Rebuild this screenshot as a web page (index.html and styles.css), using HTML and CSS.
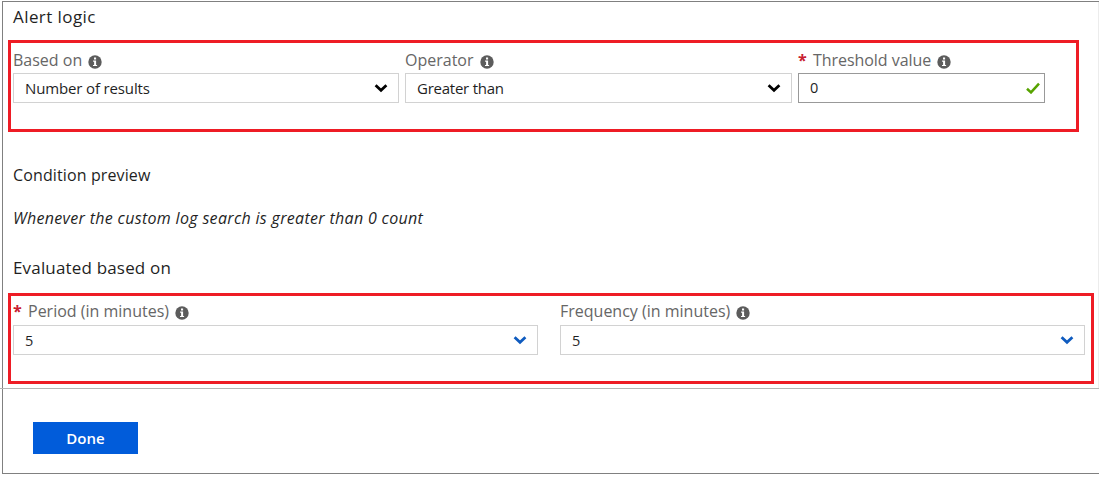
FILE: index.html
```html
<!DOCTYPE html>
<html lang="en">
<head>
<meta charset="utf-8">
<title>Alert logic</title>
<link rel="stylesheet" href="styles.css">
</head>
<body>
<svg width="0" height="0" class="defs">
  <symbol id="info" viewBox="0 0 14 14"><circle cx="7" cy="7" r="6.700" fill="#5c5c5c"/><path d="M6 2.500h2.100v2H6zM5.100 5.600h3v4.300h1v1.200H5V9.900h1.100V6.800h-1z" fill="#fff"/></symbol>
  <symbol id="chev" viewBox="0 0 14 10"><path d="M1.600 2.300 7 7.300 12.400 2.300" fill="none" stroke="currentColor" stroke-width="2.800"/></symbol>
</svg>
<main class="panel">
  <section class="content">
    <h2 class="title"><span class="t-alert">Alert logic</span></h2>
    <div class="marked logic">
      <div class="field based">
        <label class="label"><span>Based on</span><svg class="info"><use href="#info"/></svg></label>
        <div class="select"><span class="t-number">Number of results</span><svg class="chev"><use href="#chev"/></svg></div>
      </div>
      <div class="field operator">
        <label class="label"><span>Operator</span><svg class="info"><use href="#info"/></svg></label>
        <div class="select"><span class="t-greater">Greater than</span><svg class="chev"><use href="#chev"/></svg></div>
      </div>
      <div class="field threshold">
        <label class="label"><b class="req">*</b><span class="t-threshold">Threshold value</span><svg class="info"><use href="#info"/></svg></label>
        <div class="select input"><span class="digit">0</span><svg class="check" viewBox="0 0 14 12"><path d="M1 6.800 5 10.400 13 1.600" fill="none" stroke="#57a300" stroke-width="2.500"/></svg></div>
      </div>
    </div>
    <h3 class="preview-title"><span class="t-condition">Condition preview</span></h3>
    <p class="preview"><span class="t-whenever">Whenever the custom log search is greater than 0 count</span></p>
    <h2 class="evaluated"><span class="t-evaluated">Evaluated based on</span></h2>
    <div class="marked timing">
      <div class="field period">
        <label class="label"><b class="req">*</b><span>Period (in minutes)</span><svg class="info"><use href="#info"/></svg></label>
        <div class="select blue"><span class="digit">5</span><svg class="chev"><use href="#chev"/></svg></div>
      </div>
      <div class="field frequency">
        <label class="label"><span>Frequency (in minutes)</span><svg class="info"><use href="#info"/></svg></label>
        <div class="select blue"><span class="digit">5</span><svg class="chev"><use href="#chev"/></svg></div>
      </div>
    </div>
  </section>
  <footer class="footer"><button class="done">Done</button></footer>
</main>
</body>
</html>
```
FILE: styles.css
```css
* { box-sizing: border-box; }
body { margin: 0; background: #fff; font-family: "Open Sans", "Noto Sans", sans-serif; color: #1f1f1f; overflow: hidden; }
.defs { display: block; position: absolute; }
.panel { margin: 1px 0 0 2px; height: 473px; border: 1px solid #808080; border-right: 0; white-space: nowrap; }
.content { height: 386px; padding-left: 5px; border-right: 1px solid #ececec; }
h2, h3, p { margin: 0; padding-left: 5px; font-weight: 400; }
.title { height: 38px; padding-top: 3px; font-size: 17px; line-height: 24px; }
.t-alert { letter-spacing: 0.42px; }
.t-number { letter-spacing: -0.14px; }
.t-greater { letter-spacing: -0.24px; }
.t-threshold { letter-spacing: -0.05px; }
.t-condition { letter-spacing: 0.12px; }
.t-whenever { letter-spacing: 0.32px; }
.t-evaluated { letter-spacing: 0.17px; }
.marked { display: flex; border: 3px solid #ee1c25; }
.logic { width: 1071px; height: 92px; padding: 7px 0 0 2px; }
.timing { width: 1086px; height: 91px; padding: 5px 0 0 2px; }
.field { flex: none; }
.based { width: 386px; margin-right: 6px; }
.operator { width: 387px; margin-right: 6px; }
.threshold { width: 247px; }
.period { width: 525px; margin-right: 22px; }
.frequency { width: 525px; }
.label { display: flex; height: 23px; line-height: 20px; font-size: 16px; color: #666; }
.timing .label { height: 24px; }
.req { width: 15px; color: #c8202f; font-size: 16px; line-height: 20px; }
.info { width: 14px; height: 14px; margin: 5px 0 0 6px; }
.select { display: flex; align-items: center; justify-content: space-between; height: 30px; padding: 0 10px 0 11px; border: 1px solid #d2d2d2; font-size: 15px; line-height: 28px; }
.digit { font-size: 14.500px; }
.timing .digit { padding-top: 1px; }
.chev { width: 14px; height: 10px; color: #000; }
.blue .chev { color: #0f5bbf; }
.input { padding-right: 4px; border-color: #999; }
.check { width: 14px; height: 12px; }
.preview-title { margin-top: 32px; font-size: 16px; line-height: 22px; }
.preview { margin-top: 21px; font-size: 16px; line-height: 22px; font-style: italic; }
.evaluated { margin-top: 27px; height: 37px; font-size: 17px; line-height: 24px; }
.footer { height: 85px; margin-left: -3px; padding: 33px 0 0 33px; border-top: 1px solid #b5b5b5; }
.done { display: block; width: 105px; height: 32px; padding: 0; border: 0; background: #015cda; color: #fff; font: 600 15px/32px "Open Sans", sans-serif; }
```
